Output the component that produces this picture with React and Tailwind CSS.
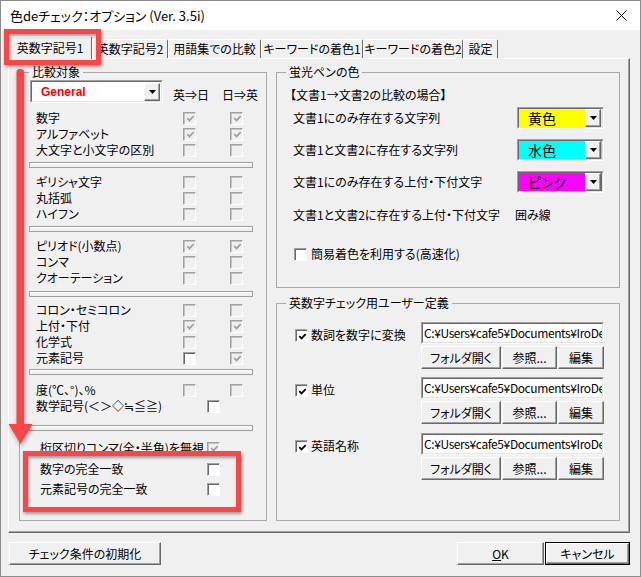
import React from 'react';

// classic 3D borders
const sunkenOuter = 'border border-t-[#a0a0a0] border-l-[#a0a0a0] border-b-white border-r-white';
const sunkenInner = 'border border-t-[#696969] border-l-[#696969] border-b-[#e3e3e3] border-r-[#e3e3e3]';

function Check({ on = false, off = false }) {
  return (
    <span className="flex h-[13px] w-[13px] shrink-0 border border-t-[#a0a0a0] border-l-[#a0a0a0] border-b-white border-r-white">
      <span
        className={`flex flex-1 items-center justify-center border-t border-l ${
          off ? 'border-t-[#c4c4c4] border-l-[#c4c4c4] bg-[#f0f0f0]' : 'border-t-[#696969] border-l-[#696969] bg-white'
        }`}
      >
        {on && (
          <svg width="9" height="9" viewBox="0 0 9 9">
            <path d="M1.3 4.2 L3.5 6.4 L7.7 2.2" fill="none" stroke={off ? '#a0a0a0' : '#000'} strokeWidth="1.8" />
          </svg>
        )}
      </span>
    </span>
  );
}

function Btn({ className = '', children }) {
  return (
    <div
      className={`flex shrink-0 items-center justify-center whitespace-nowrap border border-t-white border-l-white border-b-[#696969] border-r-[#696969] bg-[#f0f0f0] shadow-[inset_-1px_-1px_0_#a0a0a0] ${className}`}
    >
      {children}
    </div>
  );
}

function Arrow() {
  return (
    <svg width="7" height="4" viewBox="0 0 7 4">
      <path d="M0 0H7L3.5 4Z" fill="#000" />
    </svg>
  );
}

function Combo({ className = '', fill = 'bg-white', children }) {
  return (
    <div className={`flex shrink-0 ${sunkenOuter} ${className}`}>
      <div className={`flex flex-1 items-center pr-[1px] ${sunkenInner} ${fill}`}>
        <div className="flex-1 whitespace-nowrap">{children}</div>
        <Btn className="h-[18px] w-[16px]">
          <Arrow />
        </Btn>
      </div>
    </div>
  );
}

function Sep({ className = '' }) {
  return <div className={`ml-[9px] h-[6px] w-[224px] border border-[#a0a0a0] bg-[#f0f0f0] shadow-[inset_1px_1px_0_#fff] ${className}`} />;
}

function Row2({ label, a = {}, b = {}, className = '' }) {
  return (
    <div className={`flex h-[16px] items-center pl-[16px] ${className}`}>
      <span className="w-[147px] shrink-0 whitespace-nowrap">{label}</span>
      <Check {...a} />
      <span className="w-[34px] shrink-0" />
      <Check {...b} />
    </div>
  );
}

function Row1({ label, c = {}, className = '', indent = 'pl-[16px] [&>span:first-child]:w-[171px]' }) {
  return (
    <div className={`flex h-[16px] items-center ${indent} ${className}`}>
      <span className="shrink-0 whitespace-nowrap">{label}</span>
      <Check {...c} />
    </div>
  );
}

const dis = { off: true };
const disOn = { on: true, off: true };

function LeftGroup() {
  return (
    <fieldset className="h-[457px] w-[248px] min-w-0 shrink-0 border border-[#a9a9a9]">
      <legend className="ml-[9px] px-[3px] leading-[16px]">比較対象</legend>
      <div className="flex h-[23px] pl-[10px]">
        <Combo className="h-[23px] w-[133px]">
          <span className="pl-[9px] font-['Liberation_Sans',sans-serif] text-[12px] font-bold text-[#ff0000]">General</span>
        </Combo>
        <span className="ml-[10px] whitespace-nowrap pt-[7px]">英⇒日</span>
        <span className="ml-[13px] whitespace-nowrap pt-[7px]">日⇒英</span>
      </div>

      <Row2 className="mt-[7px]" label="数字" a={disOn} b={disOn} />
      <Row2 label="アルファベット" a={disOn} b={disOn} />
      <Row2 label="大文字と小文字の区別" a={dis} b={dis} />
      <Sep className="mt-[4px]" />

      <Row2 className="mt-[6px]" label="ギリシャ文字" a={dis} b={dis} />
      <Row2 label="丸括弧" a={dis} b={dis} />
      <Row2 label="ハイフン" a={dis} b={dis} />
      <Sep className="mt-[4px]" />

      <Row2 className="mt-[6px]" label="ピリオド(小数点)" a={disOn} b={disOn} />
      <Row2 label="コンマ" a={dis} b={dis} />
      <Row2 label="クオーテーション" a={dis} b={dis} />
      <Sep className="mt-[5px]" />

      <Row2 className="mt-[5px]" label="コロン・セミコロン" a={dis} b={dis} />
      <Row2 label="上付・下付" a={disOn} b={disOn} />
      <Row2 label="化学式" a={dis} b={dis} />
      <Row2 label="元素記号" a={{}} b={disOn} />
      <Sep className="mt-[3px]" />

      <Row2 className="mt-[7px]" label="度(℃、°)、%" a={dis} b={dis} />
      <Row1 label="数学記号(＜＞◇≒≦≧)" />
      <Sep className="mt-[11px]" />

      <Row1
        className="mt-[9px]"
        indent="pl-[20px] [&>span:first-child]:w-[167px]"
        label="桁区切りコンマ(全・半角)を無視"
        c={disOn}
      />
      <Row1 className="mt-[5px]" indent="pl-[20px] [&>span:first-child]:w-[167px]" label="数字の完全一致" />
      <Row1 className="mt-[4px]" indent="pl-[20px] [&>span:first-child]:w-[167px]" label="元素記号の完全一致" />
    </fieldset>
  );
}

function ColorRow({ label, fill, value, className = '' }) {
  return (
    <div className={`flex h-[22px] items-center pl-[16px] ${className}`}>
      <span className="w-[224px] shrink-0 whitespace-nowrap">{label}</span>
      <Combo className="h-[22px] w-[87px]" fill={fill}>
        <span className="pl-[9px] text-[14px]">{value}</span>
      </Combo>
    </div>
  );
}

function HighlightGroup() {
  return (
    <fieldset className="h-[224px] w-[344px] min-w-0 shrink-0 border border-[#a9a9a9]">
      <legend className="ml-[9px] px-[3px] leading-[16px]">蛍光ペンの色</legend>
      <div className="mt-[7px] h-[16px] whitespace-nowrap pl-[13px]">【文書1→文書2の比較の場合】</div>
      <ColorRow className="mt-[4px]" label="文書1にのみ存在する文字列" fill="bg-[#ffff00]" value="黄色" />
      <ColorRow className="mt-[10px]" label="文書1と文書2に存在する文字列" fill="bg-[#00ffff]" value="水色" />
      <ColorRow className="mt-[10px]" label="文書1にのみ存在する上付・下付文字" fill="bg-[#ff00ff]" value="ピンク" />
      <div className="mt-[11px] flex h-[22px] items-center pl-[16px]">
        <span className="w-[222px] shrink-0 whitespace-nowrap">文書1と文書2に存在する上付・下付文字</span>
        <span>囲み線</span>
      </div>
      <div className="mt-[20px] flex h-[16px] items-center gap-[4px] pl-[17px]">
        <Check />
        <span className="whitespace-nowrap">簡易着色を利用する(高速化)</span>
      </div>
    </fieldset>
  );
}

function DictBlock({ label, className = '' }) {
  return (
    <div className={`flex ${className}`}>
      <div className="flex w-[144px] shrink-0 items-start gap-[3px] pl-[18px] pt-[7px]">
        <Check on />
        <span className="-mt-[2px] whitespace-nowrap">{label}</span>
      </div>
      <div className="flex w-[183px] flex-col">
        <div className={`h-[22px] overflow-hidden ${sunkenOuter}`}>
          <div className={`h-full overflow-hidden whitespace-nowrap bg-white pl-[1px] leading-[18px] tracking-[-0.4px] ${sunkenInner}`}>
            C:¥Users¥cafe5¥Documents¥IroDeCheck
          </div>
        </div>
        <div className="mt-[2px] flex gap-[1px]">
          <Btn className="h-[23px] w-[80px]">フォルダ開く</Btn>
          <Btn className="h-[23px] w-[55px]">参照...</Btn>
          <Btn className="h-[23px] w-[46px]">編集</Btn>
        </div>
      </div>
    </div>
  );
}

function UserDictGroup() {
  return (
    <fieldset className="h-[226px] w-[344px] min-w-0 shrink-0 border border-[#a9a9a9]">
      <legend className="ml-[9px] px-[3px] leading-[16px]">英数字チェック用ユーザー定義</legend>
      <DictBlock className="mt-[11px]" label="数詞を数字に変換" />
      <DictBlock className="mt-[8px]" label="単位" />
      <DictBlock className="mt-[9px]" label="英語名称" />
    </fieldset>
  );
}

const tabs = [
  ['英数字記号1', 'w-[84px]'],
  ['英数字記号2', 'w-[76px]'],
  ['用語集での比較', 'w-[93px]'],
  ['キーワードの着色1', 'w-[102px]'],
  ['キーワードの着色2', 'w-[100px]'],
  ['設定', 'w-[35px]'],
];

function Tabs() {
  return (
    <div className="flex h-[22px] items-end">
      {tabs.map(([t, w], i) =>
        i === 0 ? (
          <div
            key={t}
            className={`relative z-10 -mb-[1px] flex h-[23px] shrink-0 items-center justify-center whitespace-nowrap rounded-t-[2px] border-t border-l border-r border-t-white border-l-white border-r-[#696969] bg-[#f0f0f0] pb-[1px] ${w}`}
          >
            {t}
          </div>
        ) : (
          <div
            key={t}
            className={`flex h-[19px] shrink-0 items-center justify-center whitespace-nowrap rounded-t-[2px] border-t border-l border-r border-t-white border-l-white border-r-[#696969] ${w}`}
          >
            {t}
          </div>
        )
      )}
    </div>
  );
}

function Annotations() {
  return (
    <>
      <div className="absolute left-[3px] top-[28px] z-20 h-[36px] w-[97px] border-[5px] border-[#fa4646] shadow-[1px_2px_3px_rgba(0,0,0,0.35),inset_1px_2px_3px_rgba(0,0,0,0.35)]" />
      <div className="absolute left-[22px] top-[450px] z-20 h-[61px] w-[218px] border-[5px] border-[#fa4646] shadow-[1px_2px_3px_rgba(0,0,0,0.35),inset_1px_2px_3px_rgba(0,0,0,0.35)]" />
      <svg
        className="absolute left-0 top-0 z-20 drop-shadow-[1px_2px_2px_rgba(0,0,0,0.35)]"
        width="40"
        height="450"
        viewBox="0 0 40 450"
      >
        <rect x="15.5" y="68" width="7.5" height="360" rx="3" fill="#fa4646" />
        <polygon points="7.5,423 31.5,423 19.5,443" fill="#fa4646" />
      </svg>
    </>
  );
}

export default function App() {
  return (
    <div className="relative h-[577px] w-[641px] overflow-hidden border border-[#8c8c8c] bg-[#f0f0f0] font-['Noto_Sans_CJK_JP',sans-serif] text-[12px] leading-[16px] text-black [font-feature-settings:'palt']">
      <div className="flex h-[29px] items-center justify-between bg-white pl-[9px] pr-[13px]">
        <span className="whitespace-nowrap text-[13px]">色deチェック：オプション (Ver. 3.5i)</span>
        <svg width="11" height="11" viewBox="0 0 11 11">
          <path d="M0.5 0.5 L10.5 10.5 M10.5 0.5 L0.5 10.5" stroke="#000" strokeWidth="1" />
        </svg>
      </div>

      <div className="pl-[7px] pt-[6px]">
        <Tabs />
        <div className="flex h-[475px] w-[622px] gap-[9px] border border-t-white border-l-white border-b-[#696969] border-r-[#696969] pl-[10px] pt-[5px] shadow-[inset_-1px_-1px_0_#a0a0a0]">
          <LeftGroup />
          <div className="flex flex-col gap-[7px]">
            <HighlightGroup />
            <UserDictGroup />
          </div>
        </div>

        <div className="mt-[9px] flex w-[622px] items-center">
          <Btn className="ml-[1px] h-[23px] w-[152px]">チェック条件の初期化</Btn>
          <div className="flex-1" />
          <Btn className="h-[23px] w-[87px]">
            <span className="underline">O</span>K
          </Btn>
          <div className="ml-[1px] border border-black">
            <Btn className="h-[21px] w-[83px]">キャンセル</Btn>
          </div>
        </div>
      </div>

      <Annotations />
    </div>
  );
}
